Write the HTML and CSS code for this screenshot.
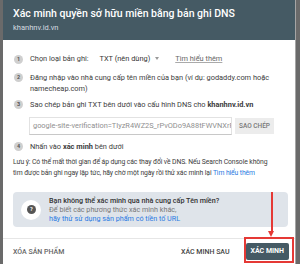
FILE: index.html
```html
<!DOCTYPE html>
<html lang="vi">
<head>
    <meta charset="UTF-8">
    <title>Xác minh DNS</title>
    <link rel="stylesheet" href="styles.css">
</head>
<body>
    <div class="dialog">
        <div class="header">
            <h1>Xác minh quyền sở hữu miền bằng bản ghi DNS</h1>
            <p class="dominio">khanhnv.id.vn</p>
        </div>

        <div class="content">
            <div class="paso paso-1">
                <span class="numero">1</span>
                <span>Chọn loại bản ghi:</span>
                <span class="selector">TXT (nên dùng) <span class="flecha"></span></span>
                <a class="tim-hieu">Tìm hiểu thêm</a>
            </div>

            <div class="paso paso-2">
                <span class="numero">2</span>
                <span>Đăng nhập vào nhà cung cấp tên miền của bạn (ví dụ: godaddy.com hoặc namecheap.com)</span>
            </div>

            <div class="paso">
                <span class="numero">3</span>
                <span>Sao chép bản ghi TXT bên dưới vào cấu hình DNS cho <b>khanhnv.id.vn</b></span>
            </div>

            <div class="registro">
                <div class="campo">google-site-verification=TIyzR4WZ2S_rPvODo9A88tFWVNXrFq</div>
                <span class="copiar">SAO CHÉP</span>
            </div>

            <div class="paso">
                <span class="numero">4</span>
                <span>Nhấn vào <b>xác minh</b> bên dưới</span>
            </div>

            <p class="nota">Lưu ý: Có thể mất thời gian để áp dụng các thay đổi về DNS. Nếu Search Console không tìm được bản ghi ngay lập tức, hãy chờ một ngày rồi thử xác minh lại <a class="enlace">Tìm hiểu thêm</a></p>

            <div class="ayuda">
                <div class="icono">
                    <svg width="9" height="9" viewBox="0 0 24 24"><circle cx="12" cy="12" r="12" fill="#555"/><text x="12" y="17" text-anchor="middle" font-family="Roboto, sans-serif" font-weight="700" font-size="15" fill="#fff">?</text></svg>
                </div>
                <div class="ayuda-texto">
                    <b>Bạn không thể xác minh qua nhà cung cấp Tên miền?</b>
                    <span class="gris">Để biết các phương thức xác minh khác,</span>
                    <a class="enlace">hãy thử sử dụng sản phẩm có tiền tố URL</a>
                </div>
            </div>
        </div>

        <div class="footer">
            <span class="boton-texto">XÓA SẢN PHẨM</span>
            <div class="acciones">
                <span class="boton-texto oscuro">XÁC MINH SAU</span>
                <span class="boton-principal">XÁC MINH</span>
            </div>
        </div>

        <!-- marcas rojas de la captura -->
        <div class="flecha-roja"></div>
        <div class="marco-rojo"></div>
    </div>
</body>
</html>
```

FILE: styles.css
```css
* {
    margin: 0;
    padding: 0;
    box-sizing: border-box;
}

body {
    background: #6a6a6a;
    font-family: Roboto, 'Liberation Sans', sans-serif;
    height: 264px;
    overflow: hidden;
}

.dialog {
    position: relative;
    margin-left: 3px;
    width: 293px;
    height: 264px;
    background: #fff;
    border-right: 1px solid #a5a5a5;
    color: #3c3c3c;
}

.header {
    background: #455a64;
    height: 40px;
    padding: 7px 10px 0;
}

h1 {
    font-size: 10.5px;
    font-weight: 500;
    color: #fff;
    line-height: 13px;
}

.dominio {
    font-size: 7.5px;
    color: #d5dde1;
    margin-top: 3px;
}

.content {
    padding: 13px 7px 0 10px;
    font-size: 7.4px;
    line-height: 11px;
}

.paso {
    display: flex;
    align-items: flex-start;
    gap: 7px;
}

.numero {
    flex: none;
    width: 9px;
    height: 9px;
    border-radius: 50%;
    background: #cfcfcf;
    color: #555;
    font-size: 5.5px;
    font-weight: 700;
    line-height: 9px;
    text-align: center;
    margin-top: 1px;
    margin-left: 1px;
}

.paso-1 {
    align-items: center;
    margin-bottom: 8px;
}

.paso-2 {
    margin-bottom: 5px;
}

.selector {
    margin-left: 4px;
    color: #333;
    display: inline-flex;
    align-items: center;
    gap: 5px;
}

.flecha {
    border-left: 2.5px solid transparent;
    border-right: 2.5px solid transparent;
    border-top: 3px solid #999;
}

.tim-hieu {
    margin-left: 9px;
    color: #666;
    text-decoration: underline;
    text-decoration-color: #aaa;
}

.registro {
    display: flex;
    align-items: center;
    gap: 3px;
    margin: 7px 0 6px 16px;
}

.campo {
    width: 203px;
    height: 18px;
    border: 1px solid #e2e2e2;
    border-bottom-color: #c8c8c8;
    padding: 0 3px;
    line-height: 16px;
    color: #8f8f8f;
    white-space: nowrap;
    overflow: hidden;
}

.copiar {
    background: #ececec;
    color: #777;
    font-size: 6.5px;
    font-weight: 500;
    padding: 0 4px;
    line-height: 16px;
}

.nota {
    margin-top: 5px;
    padding-right: 15px;
    font-size: 6.8px;
    letter-spacing: -0.1px;
    color: #3c3c3c;
}

.enlace {
    color: #2a7ae2;
}

.ayuda {
    display: flex;
    align-items: center;
    gap: 8px;
    margin-top: 13px;
    height: 35px;
    background: #dfe4ea;
    border-radius: 4px;
    padding: 0 10px 0 8px;
    font-size: 7.2px;
    line-height: 9px;
}

.icono {
    width: 20px;
    height: 20px;
    border-radius: 50%;
    background: #fff;
    display: flex;
    align-items: center;
    justify-content: center;
    flex: none;
}

.ayuda-texto {
    display: flex;
    flex-direction: column;
}

.ayuda-texto b {
    font-weight: 500;
    color: #333;
}

.gris {
    color: #777;
}

.footer {
    position: absolute;
    left: 0;
    right: 0;
    bottom: 0;
    height: 26px;
    border-top: 1px solid #e6e6e6;
    display: flex;
    align-items: center;
    justify-content: space-between;
    padding: 0 6px 0 10px;
}

.acciones {
    display: flex;
    align-items: center;
    gap: 16px;
}

.boton-texto {
    font-size: 7px;
    font-weight: 500;
    color: #666;
}

.oscuro {
    color: #444;
}

.boton-principal {
    background: #455a64;
    color: #fff;
    font-size: 7px;
    font-weight: 700;
    padding: 0 5px;
    line-height: 17px;
    border-radius: 2px;
}

/* anotaciones rojas encima del diálogo */
.flecha-roja {
    position: absolute;
    left: 268px;
    top: 192px;
    width: 1.5px;
    height: 40px;
    background: #e53935;
}

.flecha-roja::after {
    content: '';
    position: absolute;
    left: -3px;
    bottom: -5px;
    border-left: 3.75px solid transparent;
    border-right: 3.75px solid transparent;
    border-top: 6px solid #e53935;
}

.marco-rojo {
    position: absolute;
    left: 241px;
    top: 237px;
    width: 50px;
    height: 26px;
    border: 2px solid #e53935;
}
```
